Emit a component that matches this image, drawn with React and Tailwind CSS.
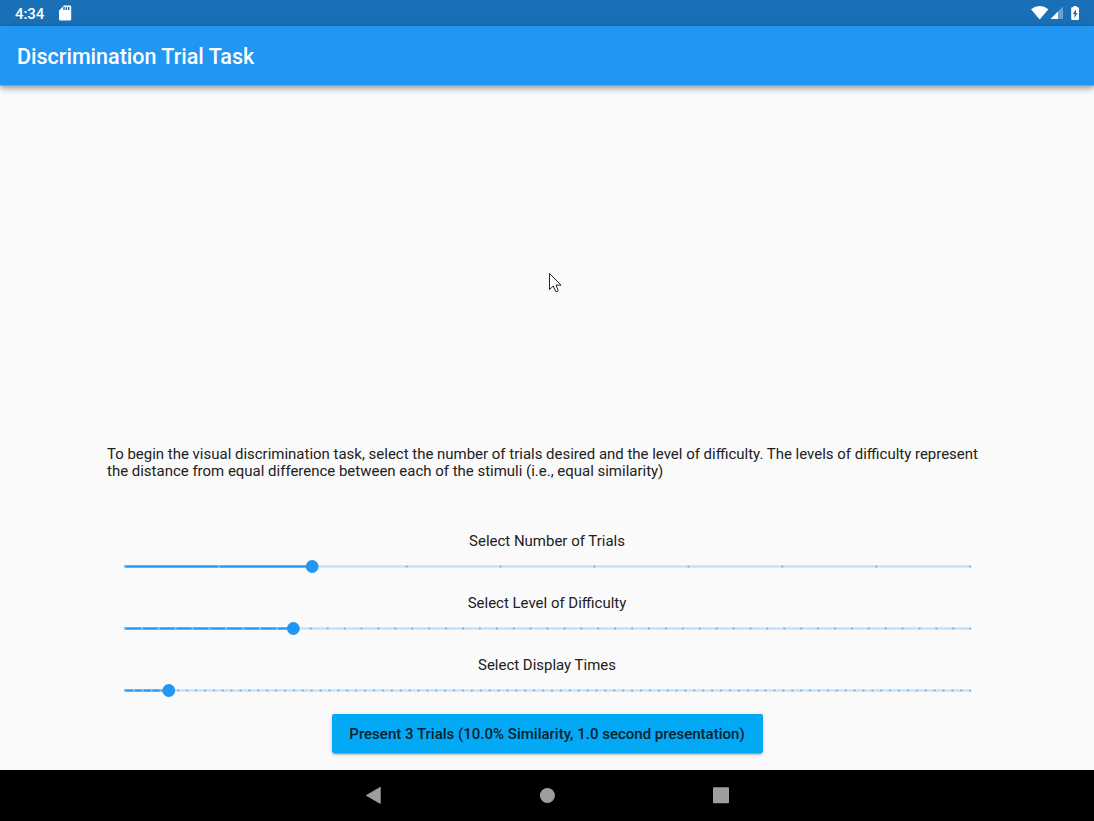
const START = 14.6;
const SPAN = 845.3;

function Slider({ label, divisions, value }) {
  const thumb = START + (SPAN * value) / divisions;
  const ticks = Array.from({ length: divisions + 1 }, (_, i) => i);
  return (
    <div className="flex h-[62px] flex-col items-center">
      <div className="h-[18px] text-[14.980px] leading-[18px]">{label}</div>
      <svg className="mt-2 block h-[17px] w-[874px]" viewBox="0 0 874 17" role="img" aria-label={label}>
        <rect x={thumb} y="7.300" width={861 - thumb} height="2.400" fill="#c6e1f7" />
        <rect x="14" y="7.300" width={thumb - 14} height="2.400" fill="#2196f3" />
        {ticks.map((i) => (
          <circle
            key={i}
            cx={START + 0.3 + (SPAN * i) / divisions}
            cy="8.5"
            r="1.07"
            fill={i < value ? "#ffffff" : "#2196f3"}
            fillOpacity={i < value ? "0.5" : "0.62"}
          />
        ))}
        <circle cx={thumb - 0.3} cy="8.5" r="6.4" fill="#2196f3" />
      </svg>
    </div>
  );
}

function StatusBar() {
  return (
    <div className="flex h-[26px] shrink-0 items-center justify-between bg-[#1a70b7] text-white">
      <div className="flex items-center pl-[15px]">
        <span className="w-[44px] pt-px text-[15px] font-medium leading-[26px] tracking-[-0.1px]">4:34</span>
        <svg className="h-[16px] w-[13px]" viewBox="0 0 13 16">
          <path d="M5 .5h6a1.2 1.2 0 0 1 1.2 1.2v12.6A1.2 1.2 0 0 1 11 15.5H1.2A1.2 1.2 0 0 1 0 14.300V5.500Z" fill="white" />
          <path d="M4.200 2h1.500v3H4.200zM6.600 2h1.500v3H6.600zM9 2h1.500v3H9z" fill="#1a70b7" />
        </svg>
      </div>
      <svg className="h-[26px] w-[64px]" viewBox="1030 0 64 26">
        <path d="M1031 9.200Q1039.700 2.800 1048.400 9.200L1039.700 19.500Z" fill="white" />
        <path d="M1063 6.500V19H1050.500Z" fill="white" fillOpacity=".35" />
        <path d="M1058 11.500V19H1050.500Z" fill="white" />
        <path d="M1073.400 6h3.400v1.300h1.400q.8 0 .8.800v11q0 .8-.8.800h-6.200q-.8 0-.8-.8v-11q0-.8.800-.8h1.400Z" fill="white" />
        <path d="M1076 9.200l-3.200 4.900h1.700v3.800l3.100-5h-1.600Z" fill="#1a70b7" />
      </svg>
    </div>
  );
}

function Cursor() {
  return (
    <svg className="absolute left-[549px] top-[272px] h-[22px] w-[14px]" viewBox="0 0 14 22">
      <path d="M.5 1.500V17.500L4.300 14L6.700 19.500Q8 20.200 9.200 18.700L7 13.100H12Z" fill="white" stroke="#222" strokeWidth="1" />
    </svg>
  );
}

export default function App() {
  return (
    <div className="relative flex h-[821px] w-[1094px] flex-col overflow-hidden bg-[#fafafa] font-[Roboto,sans-serif] text-[#212121]">
      <StatusBar />
      <header className="flex h-[60px] shrink-0 items-center border-b border-[#68a9df] bg-[#2196f3] pl-[17px] pt-[2px] text-[21.500px] font-medium leading-[30px] text-white shadow-[0_2px_4px_-1px_rgba(0,0,0,0.2),0_4px_5px_0_rgba(0,0,0,0.14),0_1px_10px_0_rgba(0,0,0,0.12)]">
        <h1>Discrimination Trial Task</h1>
      </header>
      <main className="flex min-h-0 flex-1 flex-col items-center pt-[360px]">
        <p className="h-[86px] w-[880px] whitespace-nowrap text-[14.980px] leading-[17px]">
          To begin the visual discrimination task, select the number of trials desired and the level of difficulty. The levels of difficulty represent
          <br />
          the distance from equal difference between each of the stimuli (i.e., equal similarity)
        </p>
        <div className="flex flex-col">
          <Slider label="Select Number of Trials" divisions={9} value={2} />
          <Slider label="Select Level of Difficulty" divisions={50} value={10} />
          <Slider label="Select Display Times" divisions={95} value={5} />
        </div>
        <button className="-mt-1 h-[38.600px] w-[431px] shrink-0 whitespace-nowrap rounded-[2px] bg-[#03a9f4] pt-px text-[15.020px] font-medium leading-[18px] text-[#06222f] shadow-[0_3px_1px_-2px_rgba(0,0,0,0.2),0_2px_2px_0_rgba(0,0,0,0.14),0_1px_5px_0_rgba(0,0,0,0.12)]">
          Present 3 Trials (10.0% Similarity, 1.0 second presentation)
        </button>
      </main>
      <nav className="flex h-[51px] shrink-0 items-center bg-black pl-[350px]">
        <svg className="h-[51px] w-[400px]" viewBox="350 770 400 51" fill="#9e9e9e">
          <path d="M380.300 787.300V803.500L366.300 795.400Z" stroke="#9e9e9e" strokeWidth=".8" strokeLinejoin="round" />
          <circle cx="547.400" cy="795.500" r="7.500" />
          <rect x="713" y="787.200" width="16" height="16" rx="1" />
        </svg>
      </nav>
      <Cursor />
    </div>
  );
}
